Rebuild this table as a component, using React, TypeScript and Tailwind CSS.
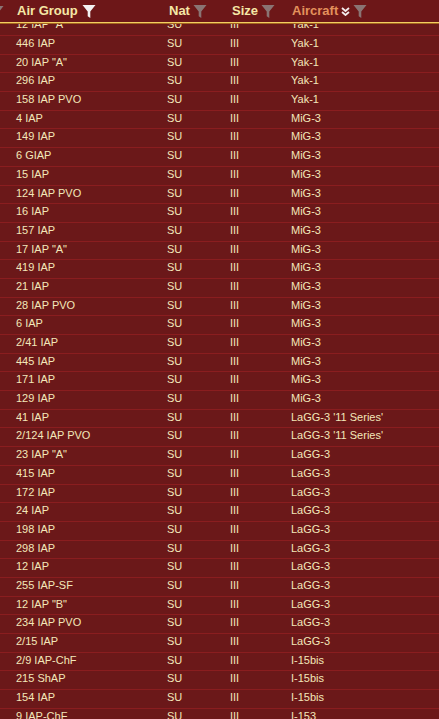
import React from "react";

type Row = { group: string; nat: string; size: string; aircraft: string };

const rows: Row[] = [
  ["12 IAP \"A\"", "Yak-1"],
  ["446 IAP", "Yak-1"],
  ["20 IAP \"A\"", "Yak-1"],
  ["296 IAP", "Yak-1"],
  ["158 IAP PVO", "Yak-1"],
  ["4 IAP", "MiG-3"],
  ["149 IAP", "MiG-3"],
  ["6 GIAP", "MiG-3"],
  ["15 IAP", "MiG-3"],
  ["124 IAP PVO", "MiG-3"],
  ["16 IAP", "MiG-3"],
  ["157 IAP", "MiG-3"],
  ["17 IAP \"A\"", "MiG-3"],
  ["419 IAP", "MiG-3"],
  ["21 IAP", "MiG-3"],
  ["28 IAP PVO", "MiG-3"],
  ["6 IAP", "MiG-3"],
  ["2/41 IAP", "MiG-3"],
  ["445 IAP", "MiG-3"],
  ["171 IAP", "MiG-3"],
  ["129 IAP", "MiG-3"],
  ["41 IAP", "LaGG-3 '11 Series'"],
  ["2/124 IAP PVO", "LaGG-3 '11 Series'"],
  ["23 IAP \"A\"", "LaGG-3"],
  ["415 IAP", "LaGG-3"],
  ["172 IAP", "LaGG-3"],
  ["24 IAP", "LaGG-3"],
  ["198 IAP", "LaGG-3"],
  ["298 IAP", "LaGG-3"],
  ["12 IAP", "LaGG-3"],
  ["255 IAP-SF", "LaGG-3"],
  ["12 IAP \"B\"", "LaGG-3"],
  ["234 IAP PVO", "LaGG-3"],
  ["2/15 IAP", "LaGG-3"],
  ["2/9 IAP-ChF", "I-15bis"],
  ["215 ShAP", "I-15bis"],
  ["154 IAP", "I-15bis"],
  ["9 IAP-ChF", "I-153"],
].map(([group, aircraft]) => ({ group, nat: "SU", size: "III", aircraft }));

function Funnel({ active }: { active?: boolean }) {
  return (
    <svg width="14" height="15" viewBox="0 0 14 15" className="shrink-0">
      <path
        d="M0.5 1 H13.5 L8.3 7.5 V14 L5.7 12.2 V7.5 Z"
        fill={active ? "#f4f1f1" : "#8a7473"}
      />
    </svg>
  );
}

function Chevrons() {
  return (
    <svg width="9" height="9" viewBox="0 0 9 9" className="shrink-0">
      <path d="M1 1 L4.5 4 L8 1 M1 5 L4.5 8 L8 5" fill="none" stroke="#f4ecec" strokeWidth="1.8" />
    </svg>
  );
}

export default function App() {
  return (
    <div
      className="w-[439px] h-[719px] overflow-hidden bg-[#6b1819] flex flex-col"
      style={{ fontFamily: '"Liberation Sans", Arial, sans-serif' }}
    >
      {/* header */}
      <div className="h-[22px] shrink-0 bg-[#6d1718] grid grid-cols-[152px_63px_60px_1fr] pl-[17px] items-center text-[13px] font-bold text-[#f5e7a6] relative">
        <div className="absolute left-[-10px] top-[5px]">
          <Funnel />
        </div>
        <div className="flex items-center gap-[4px]">
          <span>Air Group</span>
          <Funnel active />
        </div>
        <div className="flex items-center gap-[3px]">
          <span>Nat</span>
          <Funnel />
        </div>
        <div className="flex items-center gap-[3px]">
          <span>Size</span>
          <Funnel />
        </div>
        <div className="flex items-center gap-[3px]">
          <span className="text-[#e3915c]">Aircraft</span>
          <Chevrons />
          <Funnel />
        </div>
      </div>
      <div className="h-[1px] shrink-0 bg-[#f3cf62]" />
      <div className="h-[1px] shrink-0 bg-[#a4661f]" />

      {/* body */}
      <div className="flex-1 overflow-hidden">
        <div className="-mt-[6.7px]">
          {rows.map((r, i) => (
            <div
              key={i}
              className="h-[18.7px] grid grid-cols-[151px_63px_61px_1fr] pl-[16px] border-b border-[#8a1d1f] text-[11px] leading-[14px] text-[#f3e7b9]"
            >
              <span>{r.group}</span>
              <span>{r.nat}</span>
              <span>{r.size}</span>
              <span>{r.aircraft}</span>
            </div>
          ))}
        </div>
      </div>
    </div>
  );
}
